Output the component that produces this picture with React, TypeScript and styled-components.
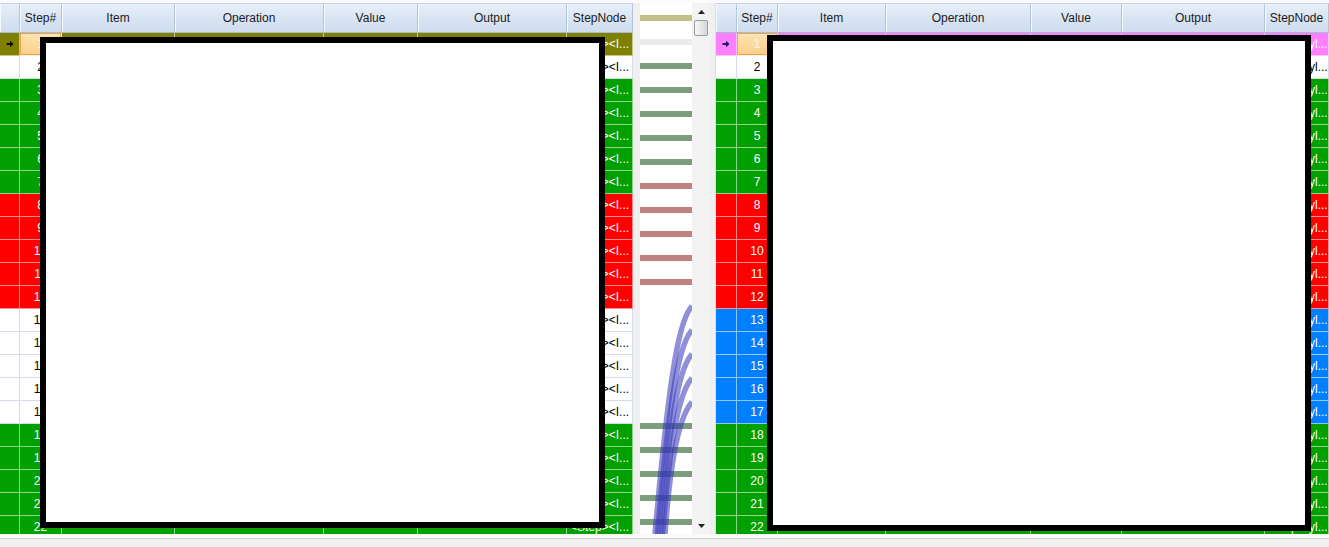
import React from 'react';
import styled, { createGlobalStyle } from 'styled-components';

type Tone = 'olive' | 'pink' | 'plain' | 'green' | 'red' | 'blue';
type Mark = 'olive' | 'same' | 'green' | 'red' | 'moved';

const toneFill: Record<Tone, string> = {
    olive: '#808000',
    pink: '#ff80ff',
    plain: '#ffffff',
    green: '#00a000',
    red: '#ff0000',
    blue: '#0080ff'
};

const markFill: Record<Exclude<Mark, 'moved'>, string> = {
    olive: '#c0c088',
    same: '#ebebeb',
    green: '#7d9d7d',
    red: '#c08080'
};

const repeat = <T,>(value: T, n: number): T[] => Array.from({ length: n }, () => value);

const leftTones: Tone[] = [
    'olive',
    'plain',
    ...repeat<Tone>('green', 5),
    ...repeat<Tone>('red', 5),
    ...repeat<Tone>('plain', 5),
    ...repeat<Tone>('green', 5)
];

const rightTones: Tone[] = [
    'pink',
    'plain',
    ...repeat<Tone>('green', 5),
    ...repeat<Tone>('red', 5),
    ...repeat<Tone>('blue', 5),
    ...repeat<Tone>('green', 5)
];

const marks: Mark[] = [
    'olive',
    'same',
    ...repeat<Mark>('green', 5),
    ...repeat<Mark>('red', 5),
    ...repeat<Mark>('moved', 5),
    ...repeat<Mark>('green', 5)
];

const titles = ['', 'Step#', 'Item', 'Operation', 'Value', 'Output', 'StepNode'];

const GlobalStyle = createGlobalStyle`
    html, body {
        margin: 0;
        padding: 0;
    }

    body {
        background: #f0f0f0;
        font-family: "Liberation Sans", Arial, sans-serif;
        font-size: 12px;
        overflow: hidden;
    }
`;

const Window = styled.div`
    position: relative;
    width: 1329px;
    height: 547px;
    display: flex;
    flex-direction: column;
    background: #f0f0f0;
    overflow: hidden;
`;

const TopEdge = styled.div`
    flex: none;
    height: 3px;
    background: #fbfbfb;
`;

const Panes = styled.div`
    flex: none;
    display: flex;
    height: 531px;
`;

const StatusStrip = styled.div`
    flex: 1;
    background: linear-gradient(#fafafa 0 4px, #cfcfcf 4px 5px, #f0f0f0 5px);
`;

/* ---------- grid ---------- */

const GridPane = styled.div<{ $width?: number }>`
    display: flex;
    flex-direction: column;
    flex: ${p => (p.$width ? 'none' : '1')};
    width: ${p => (p.$width ? `${p.$width}px` : 'auto')};
    min-width: 0;
    overflow: hidden;
    background: #fff;
`;

const HeaderRow = styled.div<{ $cols: string }>`
    flex: none;
    display: grid;
    grid-template-columns: ${p => p.$cols};
    height: 30px;
    box-sizing: border-box;
    border-top: 1px solid #c6d3e3;
    border-bottom: 1px solid #a9bcd4;
    background: linear-gradient(#e7eff9, #d9e5f3 50%, #cfdcee);
`;

const HeaderCell = styled.div`
    display: flex;
    align-items: center;
    justify-content: center;
    border-right: 1px solid #b4c4d9;
    box-shadow: inset 1px 0 0 #f5f8fc;
    color: #1c1c1c;
    white-space: nowrap;
    overflow: hidden;
`;

const Body = styled.div`
    flex: 1;
    overflow: hidden;
    background: #fff;
`;

const DataRow = styled.div<{ $cols: string; $fill: string; $ink: string; $rule: string }>`
    display: grid;
    grid-template-columns: ${p => p.$cols};
    height: 23px;
    background: ${p => p.$fill};
    color: ${p => p.$ink};
    --rule: ${p => p.$rule};
`;

const Cell = styled.div<{ $center?: boolean; $pad?: number }>`
    box-sizing: border-box;
    display: flex;
    align-items: center;
    justify-content: ${p => (p.$center ? 'center' : 'flex-start')};
    padding: 0 0 0 ${p => p.$pad ?? 2}px;
    border-right: 1px solid var(--rule);
    border-bottom: 1px solid var(--rule);
    white-space: nowrap;
    overflow: hidden;
`;

const CurrentCell = styled(Cell)`
    background: linear-gradient(#fee4b3, #fccf88);
    box-shadow: inset 0 0 0 1px #f0a24a;
    color: #fffaf0;
`;

const RowMarker = ({ color }: { color: string }) => (
    <svg width="8" height="8" viewBox="0 0 8 8">
        <path d="M0.5 3h3.5V0.8L7.6 4 4 7.2V5H0.5z" fill={color} />
    </svg>
);

interface GridViewProps {
    widths: number[];
    tones: Tone[];
    node: string;
    nodePad: number;
    marker: string;
    paneWidth?: number;
}

const GridView = ({ widths, tones, node, nodePad, marker, paneWidth }: GridViewProps) => {
    const cols = widths.map(w => `${w}px`).join(' ');

    return (
        <GridPane $width={paneWidth}>
            <HeaderRow $cols={cols}>
                {titles.map((t, i) => (
                    <HeaderCell key={i}>{t}</HeaderCell>
                ))}
            </HeaderRow>
            <Body>
                {tones.map((tone, i) => {
                    const plain = tone === 'plain';
                    const Step = i === 0 ? CurrentCell : Cell;

                    return (
                        <DataRow
                            key={i}
                            $cols={cols}
                            $fill={toneFill[tone]}
                            $ink={plain ? '#000' : '#fff'}
                            $rule={plain ? '#d3dce7' : 'rgba(255,255,255,0.55)'}
                        >
                            <Cell $center $pad={0}>
                                {i === 0 && <RowMarker color={marker} />}
                            </Cell>
                            <Step $center $pad={0}>
                                {i + 1}
                            </Step>
                            <Cell />
                            <Cell />
                            <Cell />
                            <Cell />
                            <Cell $pad={nodePad}>{node}</Cell>
                        </DataRow>
                    );
                })}
            </Body>
        </GridPane>
    );
};

/* ---------- overview strip between the grids ---------- */

const Overview = styled.div`
    flex: none;
    display: flex;
    width: 83px;
    box-sizing: border-box;
    padding: 0 5px 0 7px;
    background: #f0f0f0;
    border-right: 1px solid #dcdcdc;
`;

const MapCanvas = styled.svg`
    display: block;
    flex: none;
    background: #fff;
`;

const ScrollTrack = styled.div`
    flex: none;
    display: flex;
    flex-direction: column;
    width: 18px;
    background: #f3f3f3;
`;

const ArrowButton = styled.div`
    flex: none;
    height: 17px;
    display: flex;
    align-items: center;
    justify-content: center;
`;

const Thumb = styled.div`
    flex: none;
    height: 16px;
    margin: 0 2px;
    box-sizing: border-box;
    border: 1px solid #9b9b9b;
    border-radius: 2px;
    background: linear-gradient(90deg, #f7f7f7, #e6e6e6 55%, #d7d7d7);
`;

const TrackSpace = styled.div`
    flex: 1;
`;

const Arrow = ({ down }: { down?: boolean }) => (
    <svg width="7" height="4" viewBox="0 0 7 4">
        <path d={down ? 'M0 0h7L3.5 4z' : 'M0 4h7L3.5 0z'} fill="#222" />
    </svg>
);

const DiffMap = () => {
    const pitch = 24;
    const top = 12;
    const moved = marks
        .map((m, i) => (m === 'moved' ? i : -1))
        .filter(i => i >= 0);

    return (
        <MapCanvas width="52" height="531" viewBox="0 0 52 531">
            {marks.map((m, i) =>
                m === 'moved' ? null : (
                    <rect
                        key={i}
                        x="0"
                        y={top + i * pitch}
                        width="52"
                        height="6"
                        fill={markFill[m]}
                    />
                )
            )}
            {moved.map((row, k) => {
                const y = top + row * pitch + 3;
                return (
                    <path
                        key={row}
                        d={`M52 ${y} C41 ${y + 12} 31 ${y + 48} ${15 + k * 2.5} 531`}
                        fill="none"
                        stroke="#3434b8"
                        strokeOpacity="0.55"
                        strokeWidth="5.5"
                    />
                );
            })}
        </MapCanvas>
    );
};

/* ---------- blank panels laid over the grids ---------- */

const Blank = styled.div<{ $x: number; $y: number; $w: number; $h: number }>`
    position: absolute;
    left: ${p => p.$x}px;
    top: ${p => p.$y}px;
    width: ${p => p.$w}px;
    height: ${p => p.$h}px;
    box-sizing: border-box;
    border: 6px solid #000;
    background: #fff;
`;

const App = () => (
    <>
        <GlobalStyle />
        <Window>
            <TopEdge />
            <Panes>
                <GridView
                    paneWidth={633}
                    widths={[20, 42, 113, 149, 94, 149, 66]}
                    tones={leftTones}
                    node="<Step><I..."
                    nodePad={3}
                    marker="#111"
                />
                <Overview>
                    <DiffMap />
                    <ScrollTrack>
                        <ArrowButton>
                            <Arrow />
                        </ArrowButton>
                        <Thumb />
                        <TrackSpace />
                        <ArrowButton>
                            <Arrow down />
                        </ArrowButton>
                    </ScrollTrack>
                </Overview>
                <GridView
                    widths={[21, 41, 108, 145, 91, 143, 64]}
                    tones={rightTones}
                    node="<StepStyl..."
                    nodePad={1}
                    marker="#1c1c66"
                />
            </Panes>
            <StatusStrip />
            <Blank $x={40} $y={37} $w={565} $h={491} />
            <Blank $x={767} $y={35} $w={544} $h={496} />
        </Window>
    </>
);

export default App;
